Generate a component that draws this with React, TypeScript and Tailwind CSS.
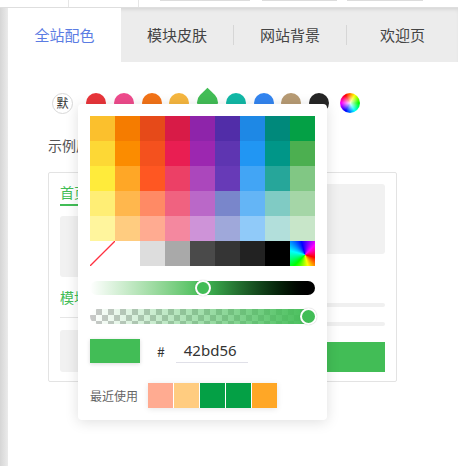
import React from "react";

const rows: string[][] = [
  ["#FBC02D", "#F57C00", "#E64A19", "#D81B47", "#8E24AA", "#512DA8", "#1E88E5", "#00897B", "#04A045"],
  ["#FDD835", "#FB8C00", "#F4511E", "#E91E52", "#9C27B0", "#5E35B1", "#2196F3", "#009688", "#4CAF50"],
  ["#FFEB3B", "#FFA726", "#FF5722", "#EC4066", "#AB47BC", "#673AB7", "#42A5F5", "#26A69A", "#81C784"],
  ["#FFEE75", "#FFB74D", "#FF8A65", "#F06280", "#BA68C8", "#7986CB", "#64B5F6", "#80CBC4", "#A5D6A7"],
  ["#FFF59D", "#FFCC80", "#FFAB91", "#F4889F", "#CE93D8", "#9FA8DA", "#90CAF9", "#B2DFDB", "#C8E6C9"],
];
const grays = ["#FFFFFF", "#DDDDDD", "#A9A9A9", "#4A4A4A", "#353535", "#222222", "#000000"];
const dots = ["#E8353A", "#EE4B8C", "#F27318", "#F5B63F", "#42BD56", "#12B8A6", "#3385F0", "#B79B74", "#262626"];
const recent = ["#FFAB91", "#FFCC80", "#04A045", "#04A045", "#FFA726"];

export default function App() {
  return (
    <div className="w-[458px] h-[466px] bg-white relative overflow-hidden font-['Noto_Sans_CJK_SC','Noto_Sans',sans-serif]">
      {/* top strip */}
      <div className="h-[7px] flex">
        <div className="w-[68px]" />
        <div className="w-px bg-[#e6e6e6]" />
        <div className="w-[69px]" />
        <div className="w-px bg-[#e6e6e6]" />
        <div className="w-[21px]" />
        <div className="w-[90px] h-[1px] bg-[#dcdcdc]" />
        <div className="w-[12px]" />
        <div className="w-[75px] h-[1px] bg-[#dcdcdc]" />
        <div className="w-[10px]" />
        <div className="w-[76px] h-[1px] bg-[#dcdcdc]" />
      </div>
      <div className="h-px bg-[#dedede]" />
      <div className="flex h-[458px]">
        <div className="w-[8px] bg-linear-to-r from-[#d6d6d6] to-[#ebebeb]" />
        <div className="flex-1 bg-white">
          {/* tabs */}
          <div className="h-[54px] flex items-center bg-[#ececec] shadow-[inset_0_3px_4px_-2px_rgba(0,0,0,0.12)]">
            <div className="w-[113px] h-full bg-white flex items-center justify-center text-[15px] text-[#5b7ce3]">全站配色</div>
            <div className="w-[112px] h-full flex items-center justify-center text-[15px] text-[#444]">模块皮肤</div>
            <div className="w-px h-[20px] bg-[#d6d6d6]" />
            <div className="w-[112px] h-full flex items-center justify-center text-[15px] text-[#444]">网站背景</div>
            <div className="w-px h-[20px] bg-[#d6d6d6]" />
            <div className="flex-1 h-full flex items-center justify-center text-[15px] text-[#444]">欢迎页</div>
          </div>

          <div className="px-[40px]">
            {/* swatch row */}
            <div className="mt-[31px] h-[20px] flex items-center">
              <div className="ml-[4px] w-[21px] h-[21px] rounded-full border border-[#d8d8d8] flex items-center justify-center text-[12px] text-[#333] leading-none">默</div>
              <div className="ml-[13px] flex items-center gap-[7.75px]">
                {dots.map((c, i) =>
                  i === 4 ? (
                    <div key={i} className="w-[21px] h-[21px] rounded-full rounded-tl-none rotate-45 -mt-[2px]" style={{ backgroundColor: c }} />
                  ) : (
                    <div key={i} className="w-[20px] h-[20px] rounded-full" style={{ backgroundColor: c }} />
                  )
                )}
                <div className="ml-[3px] w-[20px] h-[20px] rounded-full relative overflow-hidden bg-[conic-gradient(from_-30deg,#f00,#ff0,#0f0,#0ff,#00f,#f0f,#f00)]">
                  <div className="absolute inset-0 bg-[radial-gradient(circle,rgba(255,255,255,0.9)_0%,rgba(255,255,255,0)_60%)]" />
                </div>
              </div>
            </div>

            <div className="mt-[22px] h-[20px] leading-[20px] text-[14px] text-[#555]">示例展示：</div>

            {/* card */}
            <div className="mt-[17px] w-[349px] border border-[#e3e3e3] rounded-[2px] px-[11px] pt-[11px] pb-[9px] flex gap-[10px]">
              <div className="w-[130px] flex flex-col">
                <div className="h-[16px] leading-[16px] text-[14px] text-[#42bd56]">首页</div>
                <div className="mt-[4px] h-[2px] w-[28px] bg-[#42bd56]" />
                <div className="mt-[10px] h-[61px] rounded-[3px] bg-[#f1f1f1]" />
                <div className="mt-[12px] h-[16px] leading-[16px] text-[14px] text-[#42bd56]">模块</div>
                <div className="mt-[12px] h-px bg-[#e6e6e6]" />
                <div className="mt-[12px] h-[42px] rounded-[3px] bg-[#f1f1f1]" />
              </div>
              <div className="flex-1 flex flex-col">
                <div className="h-[70px] rounded-[3px] bg-[#f1f1f1]" />
                <div className="mt-[49px] h-[4px] rounded-full bg-[#f0f0f0]" />
                <div className="mt-[15px] h-[4px] rounded-full bg-[#f0f0f0]" />
                <div className="mt-[16px] h-[30px] bg-[#42bd56]" />
              </div>
            </div>
          </div>
        </div>
      </div>

      {/* popup */}
      <div className="absolute left-[78px] top-[104px] w-[249px] rounded-[4px] bg-white shadow-[0_2px_14px_rgba(0,0,0,0.13)] p-[12px]">
        <div className="grid grid-cols-9 w-[225px]">
          {rows.flat().map((c, i) => (
            <div key={i} className="w-[25px] h-[25px]" style={{ backgroundColor: c }} />
          ))}
          <div className="w-[25px] h-[25px] bg-white">
            <svg width="25" height="25" viewBox="0 0 25 25" className="block">
              <line x1="0" y1="25" x2="25" y2="0" stroke="#ff3040" strokeWidth="1.3" />
            </svg>
          </div>
          {grays.map((c, i) => (
            <div key={"g" + i} className="w-[25px] h-[25px]" style={{ backgroundColor: c }} />
          ))}
          <div className="w-[25px] h-[25px] bg-[conic-gradient(from_45deg_at_60%_55%,#f0f,#f00,#ff0,#0f0,#0ff,#00f,#f0f)]" />
        </div>

        {/* hue slider */}
        <div className="mt-[15px] h-[14px] w-[225px] rounded-full relative bg-linear-to-r from-white via-[#42bd56] to-black">
          <div className="absolute left-[105px] top-[-1px] w-[16px] h-[16px] rounded-full bg-[#42bd56] border-2 border-white shadow-[0_0_1px_rgba(0,0,0,0.3)]" />
        </div>

        {/* alpha slider */}
        <div className="mt-[14px] h-[15px] w-[225px] rounded-full relative">
          <div className="absolute inset-0 rounded-full bg-[repeating-conic-gradient(#c8c8c8_0%_25%,#ffffff_0%_50%)] bg-[length:12px_12px]" />
          <div className="absolute inset-0 rounded-full bg-linear-to-r from-[rgba(66,189,86,0)] to-[#42bd56]" />
          <div className="absolute left-[210px] top-[-1px] w-[17px] h-[17px] rounded-full bg-[#42bd56] border-2 border-white shadow-[0_0_1px_rgba(0,0,0,0.3)]" />
        </div>

        {/* preview */}
        <div className="mt-[15px] h-[24px] flex items-center">
          <div className="w-[50px] h-[24px] bg-[#42bd56] shadow-[0_1px_4px_rgba(0,0,0,0.15)]" />
          <div className="ml-[17px] text-[14px] text-[#333] leading-none">#</div>
          <div className="ml-[11px] w-[72px] h-[24px] border-b border-[#e0e0e8] pl-[8px] text-[15px] leading-[22px] text-[#333] font-['Noto_Sans',sans-serif]">42bd56</div>
        </div>

        {/* recent */}
        <div className="mt-[20px] h-[25px] flex items-center">
          <div className="w-[58px] text-[12px] text-[#666]">最近使用</div>
          <div className="flex gap-[1px] shadow-[0_1px_6px_rgba(0,0,0,0.1)]">
            {recent.map((c, i) => (
              <div key={i} className="w-[25px] h-[25px]" style={{ backgroundColor: c }} />
            ))}
          </div>
        </div>
      </div>
    </div>
  );
}
